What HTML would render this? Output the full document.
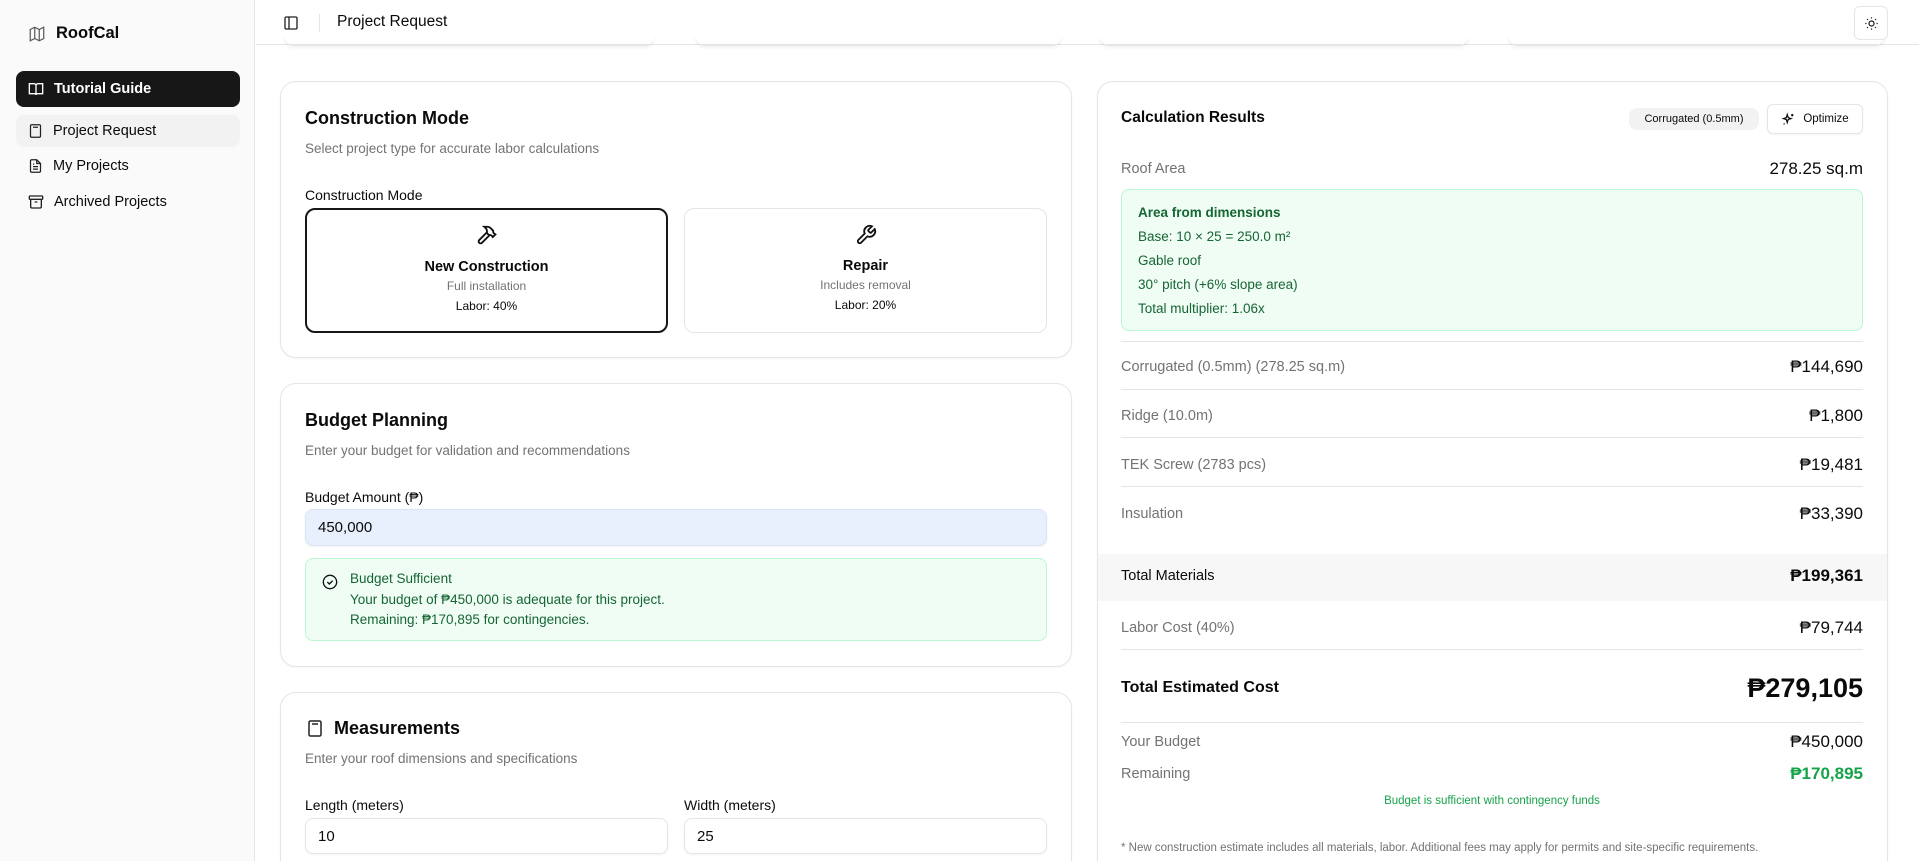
<!DOCTYPE html>
<html style="width:1919px;height:861px;overflow:hidden"><head><meta charset="utf-8"><style>
*{box-sizing:border-box;margin:0;padding:0}
body{width:1919px;height:861px;overflow:hidden;background:#fff;font-family:"Liberation Sans",sans-serif;color:#0a0a0a}
#w{position:relative;width:1919px;height:861px;overflow:hidden}
.a{position:absolute}
.sb{left:0;top:0;width:255px;height:861px;background:#fafafa;border-right:1px solid #e5e5e5}
.nav{left:16px;width:224px;height:34px;border-radius:8px;display:flex;align-items:center;padding-left:12px;font-size:14.5px;gap:10px}
.card{background:#fff;border:1px solid #e5e5e5;border-radius:16px;box-shadow:0 1px 2px rgba(0,0,0,.04)}
.t{font-size:18px;font-weight:600}
.sub{font-size:13.5px;color:#737373}
.lbl{font-size:14px;font-weight:500}
.opt{border:1px solid #e5e5e5;border-radius:10px;text-align:center}
.inp{border:1px solid #e5e5e5;border-radius:8px;font-size:15px;padding-left:12px;display:flex;align-items:center;box-shadow:0 1px 2px rgba(0,0,0,.05)}
.row{left:1121px;width:742px;display:flex;justify-content:space-between;align-items:center;font-size:14.5px;color:#737373}
.row b{color:#0a0a0a;font-weight:500;font-size:17px}
.hr{left:1121px;width:742px;height:1px;background:#e5e5e5}
svg{display:block}
</style></head><body><div id="w">
<div class="a sb"></div>
<div class="a" style="left:28px;top:24px;display:flex;align-items:center;gap:10px">
<svg width="18" height="18" viewBox="0 0 24 24" fill="none" stroke="#555" stroke-width="1.6"><path d="M3 6l6-3 6 3 6-3v15l-6 3-6-3-6 3z"/><path d="M9 3v15M15 6v15"/></svg>
<span style="font-size:16.5px;font-weight:600">RoofCal</span></div>
<div class="a nav" style="top:71px;height:36px;background:#171717;color:#fff;font-weight:600;border-radius:8px">
<svg width="16" height="16" viewBox="0 0 24 24" fill="none" stroke="#fff" stroke-width="2"><path d="M2 4h7a3 3 0 0 1 3 3v14a2 2 0 0 0-2-2H2zM22 4h-7a3 3 0 0 0-3 3v14a2 2 0 0 1 2-2h8z"/></svg>Tutorial Guide</div>
<div class="a nav" style="top:115px;height:32px;background:#f2f2f2">
<svg width="15" height="16" viewBox="0 0 24 24" fill="none" stroke="#222" stroke-width="2"><rect x="4" y="2" width="16" height="20" rx="2"/><path d="M8 6h8M8 11h.01M12 11h.01M16 11h.01M8 15h.01M12 15h.01M16 15h.01M8 19h.01M12 19h.01M16 19h.01"/></svg>Project Request</div>
<div class="a nav" style="top:150px;height:32px">
<svg width="15" height="16" viewBox="0 0 24 24" fill="none" stroke="#222" stroke-width="2"><path d="M14 2H6a2 2 0 0 0-2 2v16a2 2 0 0 0 2 2h12a2 2 0 0 0 2-2V8z"/><path d="M14 2v6h6M8 13h8M8 17h8M8 9h2"/></svg>My Projects</div>
<div class="a nav" style="top:186px;height:32px">
<svg width="16" height="16" viewBox="0 0 24 24" fill="none" stroke="#222" stroke-width="2"><rect x="2" y="3" width="20" height="5" rx="1"/><path d="M4 8v11a2 2 0 0 0 2 2h12a2 2 0 0 0 2-2V8M10 12h4"/></svg>Archived Projects</div>

<div class="a" style="left:256px;top:0;width:1663px;height:45px;border-bottom:1px solid #e5e5e5;background:#fff"></div>
<div class="a" style="left:283px;top:15px"><svg width="16" height="16" viewBox="0 0 24 24" fill="none" stroke="#222" stroke-width="2"><rect x="3" y="3" width="18" height="18" rx="2"/><path d="M9 3v18"/></svg></div>
<div class="a" style="left:319px;top:14px;width:1px;height:18px;background:#e5e5e5"></div>
<div class="a" style="left:337px;top:13px;font-size:15.5px;font-weight:500">Project Request</div>
<div class="a" style="left:1854px;top:6px;width:34px;height:34px;border:1px solid #e5e5e5;border-radius:6px;display:flex;align-items:center;justify-content:center"><svg width="15" height="15" viewBox="0 0 24 24" fill="none" stroke="#222" stroke-width="2"><circle cx="12" cy="12" r="4"/><path d="M12 2v2M12 20v2M4.9 4.9l1.4 1.4M17.7 17.7l1.4 1.4M2 12h2M20 12h2M4.9 19.1l1.4-1.4M17.7 6.3l1.4-1.4"/></svg></div>
<div class="a" style="left:284px;top:36px;width:371px;height:10px;border-bottom:1px solid #e5e5e5;border-radius:0 0 12px 12px;box-shadow:0 2px 3px rgba(0,0,0,.05)"></div>
<div class="a" style="left:695px;top:36px;width:367px;height:10px;border-bottom:1px solid #e5e5e5;border-radius:0 0 12px 12px;box-shadow:0 2px 3px rgba(0,0,0,.05)"></div>
<div class="a" style="left:1099px;top:36px;width:370px;height:10px;border-bottom:1px solid #e5e5e5;border-radius:0 0 12px 12px;box-shadow:0 2px 3px rgba(0,0,0,.05)"></div>
<div class="a" style="left:1508px;top:36px;width:377px;height:10px;border-bottom:1px solid #e5e5e5;border-radius:0 0 12px 12px;box-shadow:0 2px 3px rgba(0,0,0,.05)"></div>

<div class="a card" style="left:280px;top:81px;width:792px;height:277px"></div>
<div class="a t" style="left:305px;top:108px">Construction Mode</div>
<div class="a sub" style="left:305px;top:141px">Select project type for accurate labor calculations</div>
<div class="a lbl" style="left:305px;top:187px">Construction Mode</div>
<div class="a opt" style="left:305px;top:208px;width:363px;height:125px;border:2px solid #171717">
<svg style="margin:14px auto 0" width="22" height="22" viewBox="0 0 24 24" fill="none" stroke="#111" stroke-width="2"><path d="M15 12l-8.5 8.5a2.1 2.1 0 0 1-3-3L12 9"/><path d="M17.6 15L22 10.6M20.9 11.6l-1.3-1.3c-.6-.6-.9-1.3-.9-2.1v-.9l-2.3-2.3A5.5 5.5 0 0 0 12.5 3H9l.9.8A6 6 0 0 1 12 8.3V10l2 2h1.2c.8 0 1.5.3 2.1.9l1.2 1.2"/></svg>
<div style="font-size:14.5px;font-weight:600;margin-top:13px">New Construction</div>
<div style="font-size:12px;color:#737373;margin-top:4px">Full installation</div>
<div style="font-size:12px;font-weight:500;margin-top:6px">Labor: 40%</div></div>
<div class="a opt" style="left:684px;top:208px;width:363px;height:125px">
<svg style="margin:15px auto 0" width="22" height="22" viewBox="0 0 24 24" fill="none" stroke="#111" stroke-width="2"><path d="M14.7 6.3a1 1 0 0 0 0 1.4l1.6 1.6a1 1 0 0 0 1.4 0l3.8-3.8a6 6 0 0 1-7.9 7.9l-6.9 6.9a2.1 2.1 0 0 1-3-3l6.9-6.9a6 6 0 0 1 7.9-7.9z"/></svg>
<div style="font-size:14.5px;font-weight:600;margin-top:12px">Repair</div>
<div style="font-size:12px;color:#737373;margin-top:4px">Includes removal</div>
<div style="font-size:12px;font-weight:500;margin-top:6px">Labor: 20%</div></div>

<div class="a card" style="left:280px;top:383px;width:792px;height:284px"></div>
<div class="a t" style="left:305px;top:410px">Budget Planning</div>
<div class="a sub" style="left:305px;top:443px">Enter your budget for validation and recommendations</div>
<div class="a lbl" style="left:305px;top:489px">Budget Amount (₱)</div>
<div class="a inp" style="left:305px;top:509px;width:742px;height:37px;background:#e8f0fe;border-color:#dbe4f3">450,000</div>
<div class="a" style="left:305px;top:558px;width:742px;height:83px;background:#f0fdf4;border:1px solid #bbf7d0;border-radius:8px"></div>
<div class="a" style="left:322px;top:574px"><svg width="16" height="16" viewBox="0 0 24 24" fill="none" stroke="#111" stroke-width="2"><circle cx="12" cy="12" r="10"/><path d="M8 12l3 3 5-5"/></svg></div>
<div class="a" style="left:350px;top:569px;font-size:13.5px;color:#166534;line-height:20.5px">
<div style="font-weight:500">Budget Sufficient</div><div>Your budget of ₱450,000 is adequate for this project.</div><div>Remaining: ₱170,895 for contingencies.</div></div>

<div class="a card" style="left:280px;top:692px;width:792px;height:190px"></div>
<div class="a" style="left:306px;top:719px"><svg width="18" height="19" viewBox="0 0 24 24" fill="none" stroke="#222" stroke-width="2"><rect x="4" y="2" width="16" height="20" rx="2"/><path d="M8 6h8M8 11h.01M12 11h.01M16 11h.01M8 15h.01M12 15h.01M16 15h.01M8 19h.01M12 19h.01M16 19h.01"/></svg></div>
<div class="a t" style="left:334px;top:718px">Measurements</div>
<div class="a sub" style="left:305px;top:751px">Enter your roof dimensions and specifications</div>
<div class="a lbl" style="left:305px;top:797px">Length (meters)</div>
<div class="a lbl" style="left:684px;top:797px">Width (meters)</div>
<div class="a inp" style="left:305px;top:818px;width:363px;height:36px">10</div>
<div class="a inp" style="left:684px;top:818px;width:363px;height:36px">25</div>

<div class="a card" style="left:1097px;top:81px;width:791px;height:800px;overflow:hidden">
<div class="a" style="left:0;top:472px;width:791px;height:47px;background:#f7f7f7"></div></div>
<div class="a" style="left:1121px;top:109px;font-size:15.5px;font-weight:600">Calculation Results</div>
<div class="a" style="left:1629px;top:108px;width:130px;height:22px;background:#f2f2f2;border-radius:8px;font-size:11px;font-weight:500;display:flex;align-items:center;justify-content:center">Corrugated (0.5mm)</div>
<div class="a" style="left:1767px;top:104px;width:96px;height:30px;border:1px solid #e5e5e5;border-radius:6px;font-size:11.5px;font-weight:500;display:flex;align-items:center;justify-content:center;gap:7px;box-shadow:0 1px 2px rgba(0,0,0,.05)"><svg width="15" height="15" viewBox="0 0 24 24" fill="none" stroke="#111" stroke-width="2"><path d="M10 4l1.5 5L16 10.5 11.5 12 10 17 8.5 12 4 10.5 8.5 9z"/><path d="M18 3v4M16 5h4M5 18v2M4 19h2"/></svg>Optimize</div>
<div class="row a" style="top:158px;height:22px">Roof Area<b style="font-size:17px">278.25 sq.m</b></div>
<div class="a" style="left:1121px;top:189px;width:742px;height:142px;background:#f0fdf4;border:1px solid #bbf7d0;border-radius:8px"></div>
<div class="a" style="left:1138px;top:201px;font-size:13.5px;color:#166534;line-height:24px">
<div style="font-weight:600">Area from dimensions</div><div>Base: 10 × 25 = 250.0 m²</div><div>Gable roof</div><div>30° pitch (+6% slope area)</div><div>Total multiplier: 1.06x</div></div>
<div class="a hr" style="top:341px"></div>
<div class="row a" style="top:356px;height:22px">Corrugated (0.5mm) (278.25 sq.m)<b>₱144,690</b></div>
<div class="a hr" style="top:389px"></div>
<div class="row a" style="top:405px;height:22px">Ridge (10.0m)<b>₱1,800</b></div>
<div class="a hr" style="top:437px"></div>
<div class="row a" style="top:454px;height:22px">TEK Screw (2783 pcs)<b>₱19,481</b></div>
<div class="a hr" style="top:486px"></div>
<div class="row a" style="top:503px;height:22px">Insulation<b>₱33,390</b></div>
<div class="row a" style="top:565px;height:22px;color:#0a0a0a;font-weight:500">Total Materials<b style="font-weight:600">₱199,361</b></div>
<div class="row a" style="top:617px;height:22px">Labor Cost (40%)<b>₱79,744</b></div>
<div class="a hr" style="top:649px"></div>
<div class="row a" style="top:672px;height:32px;color:#0a0a0a;font-weight:600;font-size:16px">Total Estimated Cost<b style="font-size:27px;font-weight:700">₱279,105</b></div>
<div class="a hr" style="top:722px"></div>
<div class="row a" style="top:731px;height:22px">Your Budget<b>₱450,000</b></div>
<div class="row a" style="top:763px;height:22px">Remaining<b style="color:#16a34a;font-weight:600">₱170,895</b></div>
<div class="a" style="left:1121px;top:795px;width:742px;text-align:center;font-size:11.5px;color:#16a34a">Budget is sufficient with contingency funds</div>
<div class="a" style="left:1121px;top:842px;font-size:11.5px;color:#737373">* New construction estimate includes all materials, labor. Additional fees may apply for permits and site-specific requirements.</div>
</div></body></html>
